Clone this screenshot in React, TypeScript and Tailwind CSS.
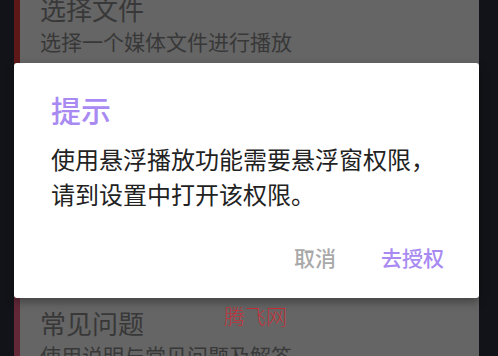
import React from 'react';

const cjk = { fontFamily: '"Noto Sans CJK SC", "Noto Sans", sans-serif' };

interface EntryProps {
  title: string;
  desc: string;
  bar: string;
  className?: string;
}

const Entry: React.FC<EntryProps> = ({ title, desc, bar, className }) => (
  <div className={`flex bg-[#656565] ${className ?? ''}`}>
    <div className={`w-[6px] shrink-0 ${bar}`} />
    <div className="pl-[20px] pt-3 pb-3 text-[#383838]">
      <div className="text-[26px] leading-[34px]">{title}</div>
      <div className="mt-px text-[21px] leading-[28px]">{desc}</div>
    </div>
  </div>
);

export default function App() {
  return (
    <div className="relative w-[498px] h-[356px] overflow-hidden bg-[#121318]" style={cjk}>
      {/* list behind the dialog */}
      <div className="flex flex-col pl-[14px] pr-[19px] -mt-[20px]">
        <Entry title="选择文件" desc="选择一个媒体文件进行播放" bar="bg-[#5e1818]" />
        <Entry
          title="常见问题"
          desc="使用说明与常见问题及解答"
          bar="bg-[#632838]"
          className="mt-[227px]"
        />
      </div>

      {/* watermark */}
      <div className="absolute left-[224px] top-[302px] text-[21px] leading-[26px] font-thin text-[#e0202a]">
        腾飞网
      </div>

      {/* dialog */}
      <div className="absolute left-[14px] top-[63px] w-[465px] h-[235px] rounded-[3px] bg-white shadow-[0_4px_10px_rgba(0,0,0,0.35)]">
        <div className="pl-[37px] pt-[26px]">
          <div className="text-[30px] leading-[40px] font-medium text-[#a88af2]">提示</div>
          <div className="mt-[12px] text-[24px] leading-[35px] text-[#222222]">
            <div>使用悬浮播放功能需要悬浮窗权限，</div>
            <div>请到设置中打开该权限。</div>
          </div>
        </div>
        <div className="mt-[31px] flex justify-end gap-[45px] pr-[35px] text-[21px] leading-[30px] font-medium">
          <button className="text-[#a9a9a9]">取消</button>
          <button className="text-[#a88af2]">去授权</button>
        </div>
      </div>
    </div>
  );
}
